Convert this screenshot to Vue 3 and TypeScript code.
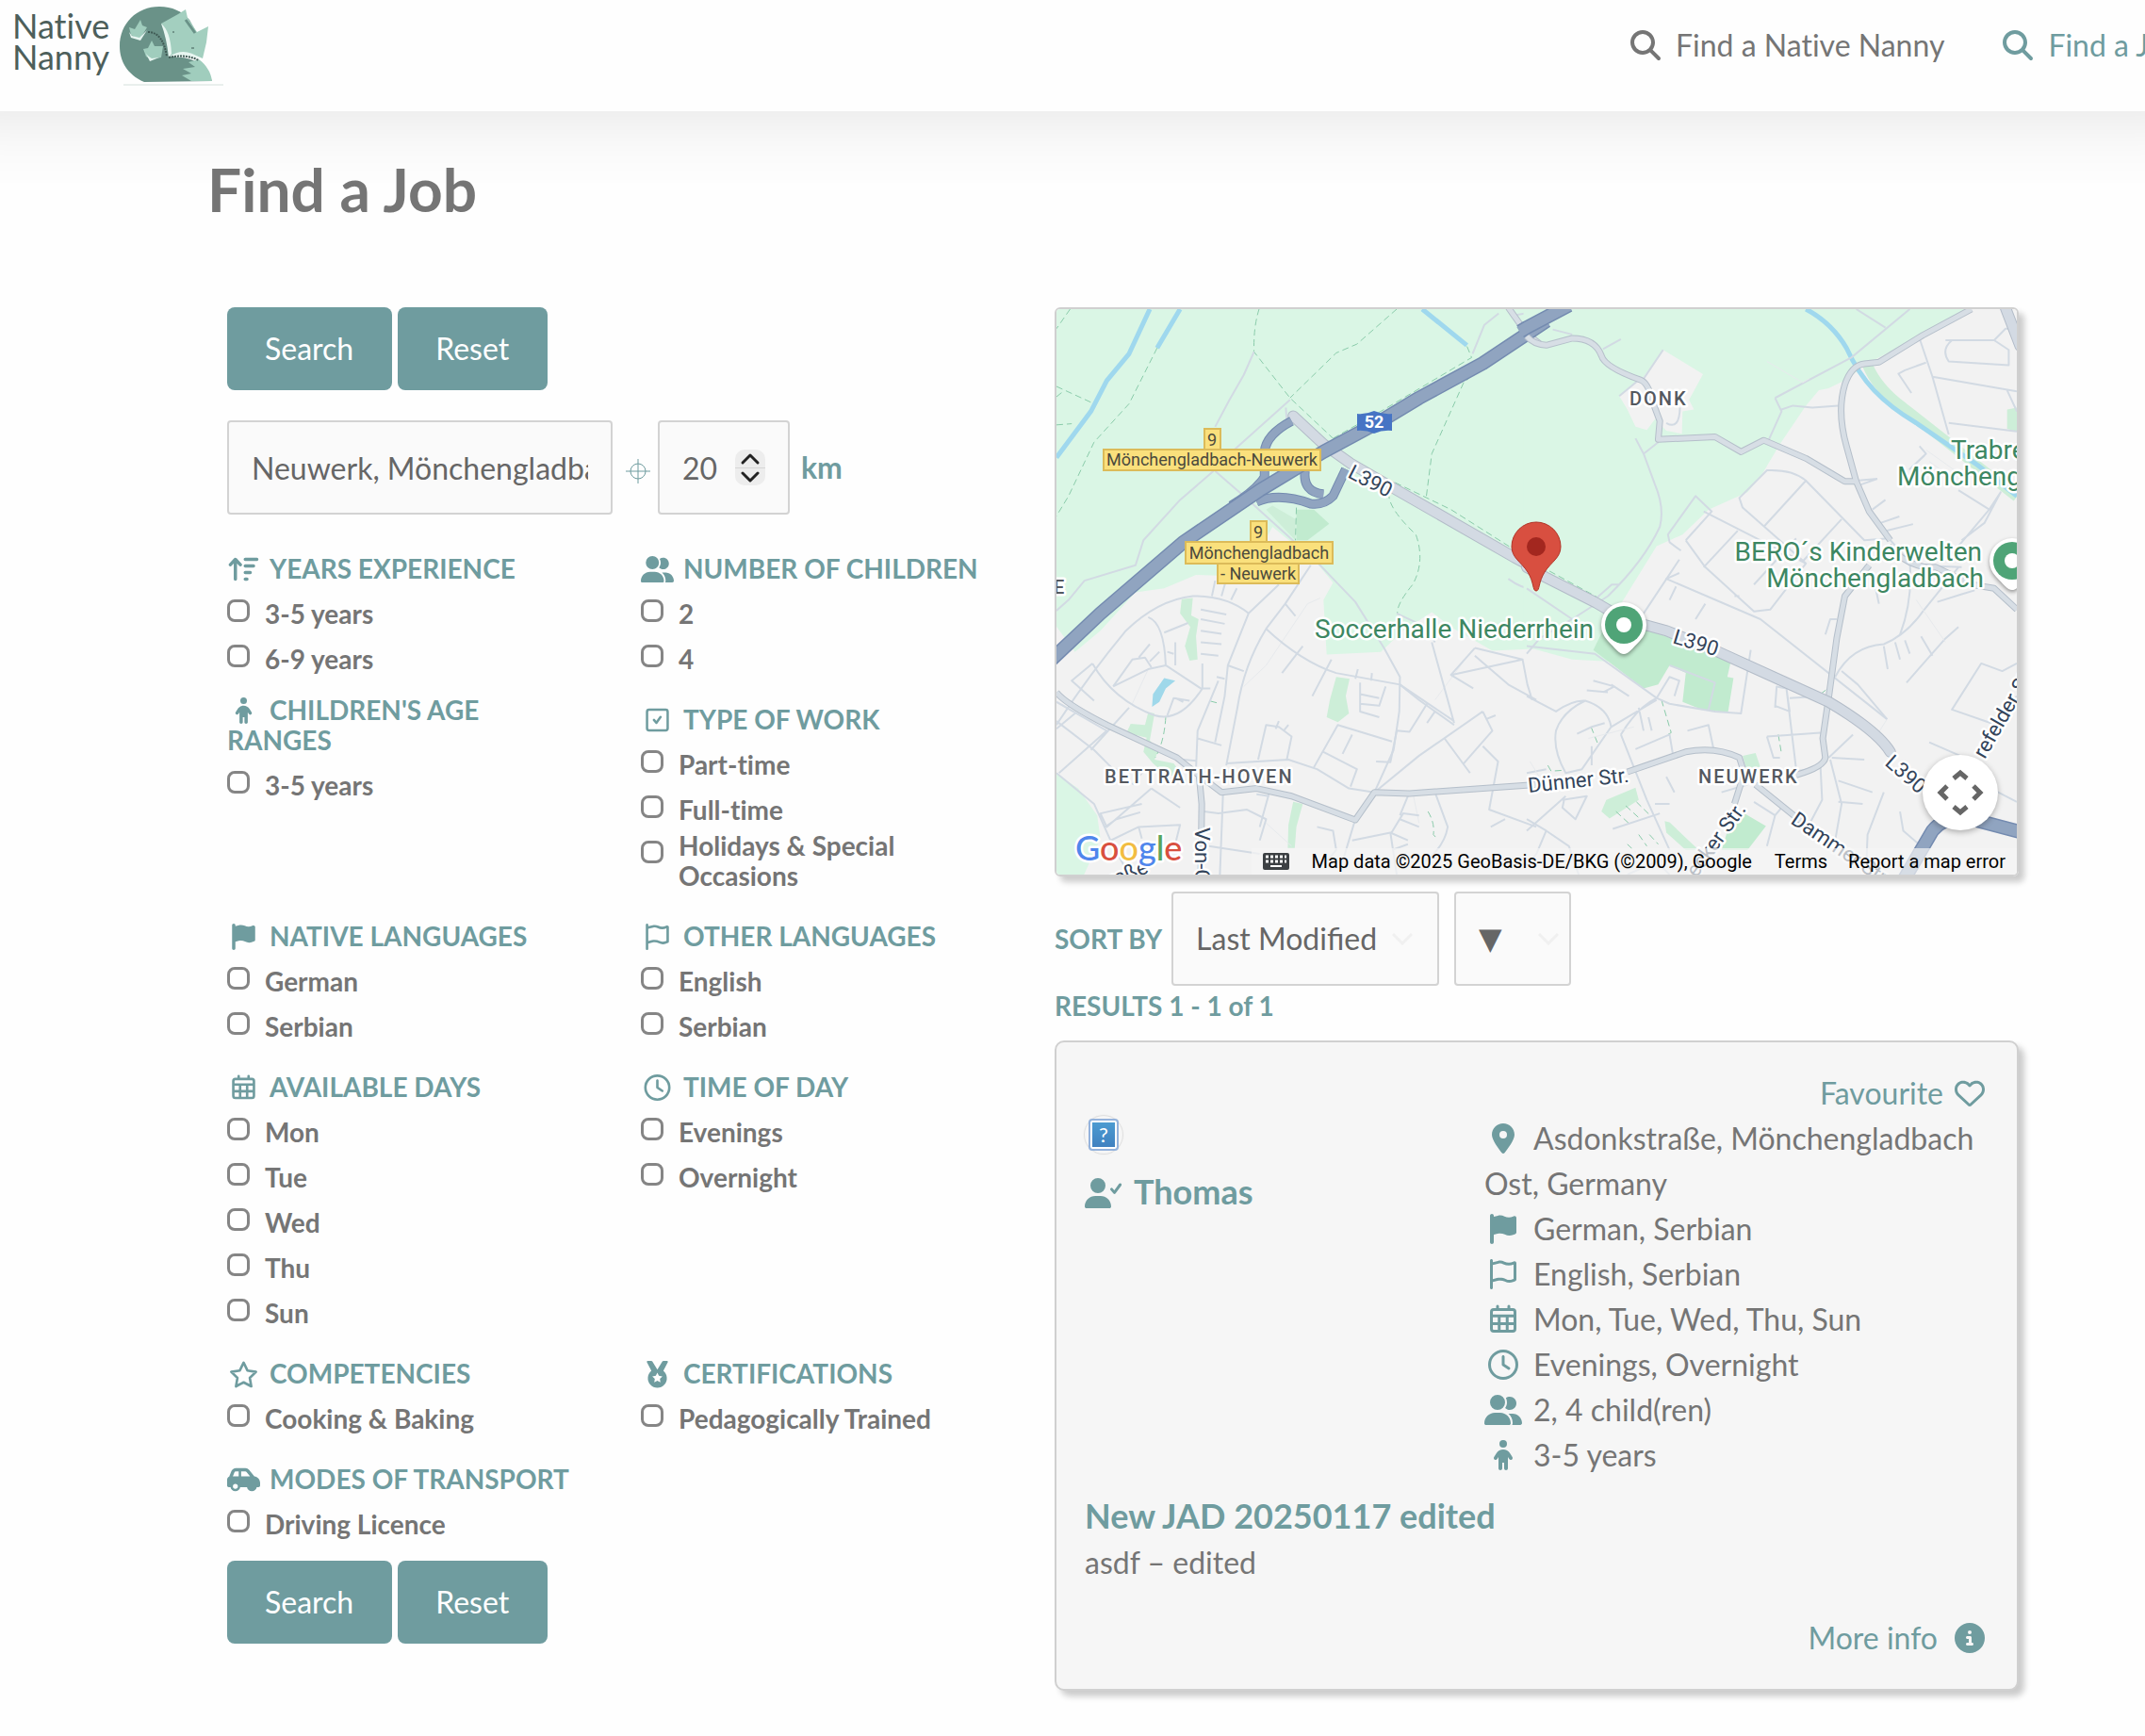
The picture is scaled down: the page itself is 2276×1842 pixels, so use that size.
<script setup lang="ts">
import { ref } from 'vue'

interface Icon {
  w: number
  fill?: string
  line?: string
  sw?: number
}

interface FilterGroup {
  id: string
  title: string
  icon: string
  options: string[]
  wraps?: boolean
}

interface Detail {
  icon: string
  text: string
}

const icons: Record<string, Icon> = {
  search: {
    w: 512,
    fill: 'M416 208c0 45.9-14.9 88.3-40 122.7L502.6 457.4c12.5 12.5 12.5 32.8 0 45.3s-32.8 12.5-45.3 0L330.7 376c-34.4 25.2-76.8 40-122.7 40C93.1 416 0 322.9 0 208S93.1 0 208 0S416 93.1 416 208zM208 352a144 144 0 1 0 0-288 144 144 0 1 0 0 288z',
  },
  pin: {
    w: 384,
    fill: 'M215.7 499.2C267 435 384 279.4 384 192C384 86 298 0 192 0S0 86 0 192c0 87.4 117 243 168.3 307.2c12.3 15.3 35.1 15.3 47.4 0zM192 128a64 64 0 1 1 0 128 64 64 0 1 1 0-128z',
  },
  flag: {
    w: 448,
    fill: 'M64 32C64 14.3 49.7 0 32 0S0 14.3 0 32V64 368 480c0 17.7 14.3 32 32 32s32-14.3 32-32V352l64.3-16.1c41.1-10.3 84.6-5.5 122.5 13.4c44.2 22.1 95.5 24.8 141.7 7.4l34.7-13c12.5-4.7 20.8-16.6 20.8-30V66.1c0-23-24.2-38-44.8-27.7l-9.6 4.8c-46.3 23.2-100.8 23.2-147.1 0c-35.1-17.6-75.4-22-113.5-12.5L64 48V32z',
  },
  flagOutline: {
    w: 448,
    fill: 'M48 24C48 10.7 37.3 0 24 0S0 10.7 0 24V64 350.5 400v88c0 13.3 10.7 24 24 24s24-10.7 24-24V388l80.3-20.1c41.1-10.3 84.6-5.5 122.5 13.4c44.2 22.1 95.5 24.8 141.7 7.4l34.7-13c12.5-4.7 20.8-16.6 20.8-30V66.1c0-23-24.2-38-44.8-27.7l-9.6 4.8c-46.3 23.2-100.8 23.2-147.1 0c-35.1-17.6-75.4-22-113.5-12.5L48 52V24zm0 77.5l96.6-24.2c27-6.7 55.5-3.6 80.4 8.8c54.9 27.4 118.7 29.7 175 6.8V334.7l-24.4 9.1c-33.7 12.6-71.2 10.7-103.4-5.4c-48.2-24.1-103.3-30.1-155.6-17.1L48 338.5v-237z',
  },
  clock: {
    w: 512,
    fill: 'M464 256A208 208 0 1 1 48 256a208 208 0 1 1 416 0zM0 256a256 256 0 1 0 512 0A256 256 0 1 0 0 256zM232 120V256c0 8 4 15.5 10.7 20l96 64c11 7.4 25.9 4.4 33.3-6.7s4.4-25.9-6.7-33.3L280 243.2V120c0-13.3-10.7-24-24-24s-24 10.7-24 24z',
  },
  users: {
    w: 640,
    fill: 'M96 128a128 128 0 1 1 256 0A128 128 0 1 1 96 128zM0 482.3C0 383.8 79.8 304 178.3 304h91.4C368.2 304 448 383.8 448 482.3c0 16.4-13.3 29.7-29.7 29.7H29.7C13.3 512 0 498.7 0 482.3zM609.3 512H471.4c5.4-9.4 8.6-20.3 8.6-32v-8c0-60.7-27.1-115.2-69.8-151.8c2.4-.1 4.7-.2 7.1-.2h61.4C567.8 320 640 392.2 640 481.3c0 17-13.8 30.7-30.7 30.7zM432 256c-31 0-59-12.6-79.3-32.9C372.4 196.5 384 163.6 384 128c0-26.8-6.6-52.1-18.3-74.3C384.3 40.1 407.2 32 432 32c61.9 0 112 50.1 112 112s-50.1 112-112 112z',
  },
  userCheck: {
    w: 640,
    fill: 'M96 128a128 128 0 1 1 256 0A128 128 0 1 1 96 128zM0 482.3C0 383.8 79.8 304 178.3 304h91.4C368.2 304 448 383.8 448 482.3c0 16.4-13.3 29.7-29.7 29.7H29.7C13.3 512 0 498.7 0 482.3z',
    line: 'M456 190L504 246 602 112',
    sw: 48,
  },
  child: {
    w: 320,
    fill: 'M96 64a64 64 0 1 1 128 0A64 64 0 1 1 96 64zm48 320v96c0 17.7-14.3 32-32 32s-32-14.3-32-32V287.8L59.1 321c-9.4 15-29.2 19.4-44.1 10S-4.5 301.9 4.9 287l39.9-63.3C69.7 184 113.2 160 160 160s90.3 24 115.2 63.6L315.1 287c9.4 15 4.9 34.7-10 44.1s-34.7 4.9-44.1-10L240 287.8V480c0 17.7-14.3 32-32 32s-32-14.3-32-32V384H144z',
  },
  heart: {
    w: 512,
    fill: 'M225.8 468.2l-2.5-2.3L48.1 303.2C17.4 274.7 0 234.7 0 192.8v-3.3c0-70.4 50-130.8 119.2-144C158.6 37.9 198.9 47 231 69.6c9 6.4 17.4 13.8 25 22.3c4.2-4.8 8.7-9.2 13.5-13.3c3.7-3.2 7.5-6.2 11.5-9C313.1 47 353.4 37.9 392.8 45.4C462 58.6 512 119.1 512 189.5v3.3c0 41.9-17.4 81.9-48.1 110.4L288.7 465.9l-2.5 2.3c-8.2 7.6-19 11.9-30.2 11.9s-22-4.2-30.2-11.9zM239.1 145c-.4-.3-.7-.7-1-1.1l-17.8-20-.1-.1c-23.1-25.9-58-37.7-92-31.2C81.6 101.5 48 142.1 48 189.5v3.3c0 28.5 11.9 55.8 32.8 75.2L256 430.7 431.2 268c20.9-19.4 32.8-46.7 32.8-75.2v-3.3c0-47.3-33.6-88-80.1-96.9c-34-6.5-69 5.4-92 31.2l-.2.2-17.8 20c-.3.4-.7.7-1 1.1c-4.5 4.5-10.6 7-16.9 7s-12.4-2.5-16.9-7z',
  },
  info: {
    w: 512,
    fill: 'M256 512A256 256 0 1 0 256 0a256 256 0 1 0 0 512zM216 336h24V272H216c-13.3 0-24-10.7-24-24s10.7-24 24-24h48c13.3 0 24 10.7 24 24v88h8c13.3 0 24 10.7 24 24s-10.7 24-24 24H216c-13.3 0-24-10.7-24-24s10.7-24 24-24zm40-208a32 32 0 1 1 0 64 32 32 0 1 1 0-64z',
  },
  car: {
    w: 640,
    fill: 'M171.3 96H224v96H111.3l30.4-75.9C146.5 104 158.2 96 171.3 96zM272 192V96h81.2c9.7 0 18.9 4.4 25 12l67.2 84H272zm256.2 1L428.2 68c-18.2-22.8-45.8-36-75-36H171.3c-39.3 0-74.6 23.9-89.1 60.3L40.6 196.4C16.8 205.8 0 228.9 0 256V368c0 17.7 14.3 32 32 32H65.3c7.6 45.4 47.1 80 94.7 80s87.1-34.6 94.7-80H385.3c7.6 45.4 47.1 80 94.7 80s87.1-34.6 94.7-80H608c17.7 0 32-14.3 32-32V320c0-65.2-48.8-119-111.8-127zM432 384a48 48 0 1 0 96 0 48 48 0 1 0-96 0zM160 336a48 48 0 1 1 0 96 48 48 0 1 1 0-96z',
  },
  sort: {
    w: 576,
    line: 'M128 448V72M32 168L128 64 224 168M320 64H544M320 192H480M320 320H416M320 448H352',
    sw: 64,
  },
  check: {
    w: 448,
    line: 'M64 56H384Q424 56 424 96V416Q424 456 384 456H64Q24 456 24 416V96Q24 56 64 56ZM158 254L205 310 286 196',
    sw: 46,
  },
  calendar: {
    w: 448,
    line: 'M64 88H384Q424 88 424 128V416Q424 456 384 456H64Q24 456 24 416V128Q24 88 64 88ZM24 196H424M24 326H424M156 200V456M292 200V456M128 32V88M320 32V88',
    sw: 48,
  },
  star: {
    w: 576,
    line: 'M288 34L362 186 528 212 408 330 436 494 288 416 140 494 168 330 48 212 214 186Z',
    sw: 48,
  },
  medal: {
    w: 448,
    fill: 'M20 24Q16 4 40 2L108 0 126 10 224 168 322 10 340 0 408 2Q432 4 428 24L340 194A184 184 0 1 1 108 194ZM224 228L194 290 126 300 175 348 164 416 224 384 284 416 273 348 322 300 254 290Z',
  },
}

const groups: FilterGroup[] = [
  { id: 'exp', title: 'YEARS EXPERIENCE', icon: 'sort', options: ['3-5 years', '6-9 years'] },
  { id: 'num', title: 'NUMBER OF CHILDREN', icon: 'users', options: ['2', '4'] },
  { id: 'age', title: "CHILDREN'S AGE RANGES", icon: 'child', options: ['3-5 years'], wraps: true },
  { id: 'work', title: 'TYPE OF WORK', icon: 'check', options: ['Part-time', 'Full-time', 'Holidays & Special Occasions'] },
  { id: 'native', title: 'NATIVE LANGUAGES', icon: 'flag', options: ['German', 'Serbian'] },
  { id: 'other', title: 'OTHER LANGUAGES', icon: 'flagOutline', options: ['English', 'Serbian'] },
  { id: 'days', title: 'AVAILABLE DAYS', icon: 'calendar', options: ['Mon', 'Tue', 'Wed', 'Thu', 'Sun'] },
  { id: 'time', title: 'TIME OF DAY', icon: 'clock', options: ['Evenings', 'Overnight'] },
  { id: 'comp', title: 'COMPETENCIES', icon: 'star', options: ['Cooking & Baking'] },
  { id: 'cert', title: 'CERTIFICATIONS', icon: 'medal', options: ['Pedagogically Trained'] },
  { id: 'transport', title: 'MODES OF TRANSPORT', icon: 'car', options: ['Driving Licence'] },
]

const details: Detail[] = [
  { icon: 'pin', text: 'Asdonkstraße, Mönchengladbach Ost, Germany' },
  { icon: 'flag', text: 'German, Serbian' },
  { icon: 'flagOutline', text: 'English, Serbian' },
  { icon: 'calendar', text: 'Mon, Tue, Wed, Thu, Sun' },
  { icon: 'clock', text: 'Evenings, Overnight' },
  { icon: 'users', text: '2, 4 child(ren)' },
  { icon: 'child', text: '3-5 years' },
]

const place = ref('Neuwerk, Mönchengladbach, Germany')
const radius = ref(20)
const checked = ref<string[]>([])

function reset(): void {
  checked.value = []
}

function box(name: string): string {
  return `0 0 ${icons[name].w} 512`
}

/* Road geometry, one set per map tile */
const westStreets = [
  'M560 350L605 280 650 215 682 155M795 280L620 410 M560 465L650 530 810 650 890 710 1000 805 1090 925 1140 1000 1138 1090 1120 1190 1060 1300M555 465L450 540 335 645 310 710 150 750 100 800 62 828',
  'M62 1125Q160 1000 280 880Q380 800 490 790Q600 790 665 835L600 970 590 1050 560 1170M665 835L760 760M550 790L560 750M580 790L592 755M610 800L628 770M350 845Q400 860 405 970L350 980 240 1025M405 970L515 1030 545 1030M175 965Q240 1060 370 1100Q450 1120 520 1030L520 965M175 965L110 1010 180 1062M240 1025L300 955 340 950 360 975M320 950L355 915M355 960L385 935M435 970L435 910M410 935L430 940',
  'M515 825L595 838M515 850L590 862M515 880L580 888M515 910L580 915M515 940L570 945M600 970L650 985M565 1000L590 1005M400 885L475 860M720 875Q830 960 940 990L1140 1020 1200 1060 1310 1125M770 990L835 920M865 1050L925 955M1000 1005L1008 980M1050 1010L1052 990M1015 1015L1015 1090 1075 1105M1015 1045L1075 1055M1015 1070L1075 1075 1095 1025M860 710L780 810 720 875Q650 970 630 1080L595 1230M780 810L812 842M410 1100L430 1055 480 1062M435 1055L460 1065',
  'M500 1240L505 1140 570 1010M505 1160L580 1178M595 1225L790 1215 880 1240 980 1290 1060 1300M695 1215L720 1125 760 1130 800 1155 785 1215M750 1135L760 1115M775 1140L790 1125M870 1235L945 1125 1115 1168M900 1195L1005 1240 985 1285M960 1200L990 1150M1065 1220L1110 1222 1130 1140 1170 1143 1225 1070M1225 1120L1250 1090M1060 1300L1200 1205 1400 1090M1310 1120L1240 910M1280 1160L1360 1250M1400 1090L1430 1140 1340 1225M1400 1180L1448 1220 1420 1345 1568 1390M1140 1020L1310 1115',
  'M62 1065L220 1140 70 1250M62 1115L180 1190 240 1240 320 1245M62 1250L180 1330 240 1440 290 1514M170 1190L290 1080M62 1135L120 1095M460 1215L500 1218M300 1280L340 1240M360 1290L450 1340M360 1290L220 1390 200 1355 330 1330M215 1390L250 1370 325 1352M220 1430L320 1390 450 1385 430 1450M320 1390L330 1420M525 1350L570 1355 660 1345 720 1370 700 1425M730 1300L700 1390M585 1300L575 1514M540 1440L700 1460M690 1305L730 1310',
  'M1000 1370L960 1480M1250 1300L1290 1390Q1280 1440 1220 1480M990 1425L1110 1405 1130 1514M1110 1410L1150 1355 1200 1360M1140 1370L1200 1390M1110 1405L1165 1425M1115 1450L1165 1435M880 1390L930 1400 940 1450 910 1480M1140 1360L1165 1310M1375 945L1480 1020 1568 1060M1375 925L1525 955 1300 995 1370 1030M1375 925L1300 995M1525 955L1540 1020 1555 1060M1410 1110L1440 1100M1425 1390L1470 1370',
]
const eastStreets = [
  'M80 97L140 110M235 148L290 122M360 225L420 150M285 270L350 225M430 340Q470 360 472 300M335 380L360 420 395 500Q425 560 410 610Q360 700 250 790L140 850 0 770M360 420L405 390M250 790L285 760 262 760 215 795M360 835L470 695M140 850L40 900 0 940',
  'M765 275L1000 170 1180 44M1015 44L1105 92M765 275L785 310 745 385M785 305L820 295 880 300 960 295M490 645L570 570 520 530 435 630 440 650 475 672M490 645L550 715 700 830 750 825 860 705 545 570M545 715L650 620M700 760L830 640M730 610L860 490Q820 460 740 463L655 535 665 560 860 705M860 490L1040 645 1115 640M850 700L970 590M470 730L430 745 720 850 1110 1110M440 800L460 765M520 850L550 810M655 790L640 790',
  'M1015 490L1080 485M1030 500L1080 485M1065 565L1105 540M1090 600L1148 583M1110 620L1190 603M1210 120L1250 220 1300 370M1250 220L1510 258M1300 340L1510 362M1480 255L1510 310M1290 125L1440 125 1485 150 1485 190 1300 180Q1275 150 1310 125M1440 125L1475 95 1510 95M1185 262L1145 212 1165 203 1230 183M1210 400L1230 420 1180 460 1225 425M1330 515L1425 565 1460 520 1410 600 1340 645M1425 565L1310 680M1115 640L1180 700Q1190 800 1150 890M1180 710L1340 715M1265 805L1340 785 1380 775M1085 810L1075 770M975 790L1045 710',
  'M950 1000Q1000 920 1100 915Q1170 890 1220 830L1330 715M1100 920L1112 980M1135 910L1150 955M1165 905L1180 940M1215 895L1250 945M1170 1015L1290 900 1330 870M1510 965L1465 985 1400 965 1310 1085 1430 1120 1510 1050M970 985L1020 1020 1110 1110M920 890L935 850 955 850M205 1010L270 1025 235 1040M185 1035L250 1040M260 1020L315 1050M0 920L210 940 400 1055 440 1070 580 1090 660 1095 690 930M400 1055L440 1000 470 1010 455 1050M440 970L580 1015 560 1085',
  'M0 1050L90 1090 Q140 1060 180 1062Q250 1080 260 1130L170 1240 120 1250Q80 1190 90 1140Q110 1090 180 1062M260 1130L400 1060M155 1148L200 1130 240 1120M200 1180L200 1230M290 1150L370 1320 440 1450M290 1150Q340 1080 400 1055M335 1188L440 1150 450 1200M345 1080L360 1140M375 1105L385 1140M495 1140L560 1125 575 1185M765 1080L770 1025 800 1030 810 1090 765 1075M800 1030L830 1240M740 1155L905 1145M740 1155L760 1210 780 1210M810 1055L910 1050M0 1250L60 1240',
  'M930 1210L1005 1150M935 1215L970 1330 945 1450M960 1270L1065 1300M960 1325L1035 1330M940 1210L1040 1215M830 1245L905 1235 910 1320 860 1400M600 1300L680 1280M700 1325L765 1360 740 1440M765 1360L785 1340M1100 1300L1050 1410 1045 1514M1150 1350L1160 1400 1215 1440M1240 1170L1335 1205M1430 1290L1510 1325M110 1320L185 1310 150 1370 110 1340 115 1320M265 1395L410 1355M310 1514L400 1480 440 1514M0 1370L60 1400 30 1460 0 1490M60 1400L130 1440 160 1514M395 1330L440 1330M430 1260L455 1300M0 1400L120 1310',
]
const westMain = [
  'M62 1040Q90 1070 220 1125L440 1210 500 1250 580 1300 690 1290 800 1310 1000 1372 1060 1300 1170 1303 1568 1280',
  'M510 1260L518 1330 515 1514',
]
const eastMain = [
  'M0 115Q20 135 60 138L140 120Q210 120 230 165Q240 195 350 228Q375 235 390 290L410 335 405 383 580 376 660 415 730 385 860 432 980 492 1015 492',
  'M1370 44L1220 112 1085 182 1040 186Q1000 190 980 240Q955 310 985 400L1015 492 1055 570 1120 645M1055 710L980 790 955 900 930 1055 912 1160 920 1210Q915 1235 830 1255',
  'M310 1247L490 1195Q580 1180 655 1210L670 1250 640 1330M705 1280L830 1365 950 1440M1115 660Q1180 720 1260 715L1370 760 1440 770 1510 825',
]
const westWide = 'M805 322L900 395 985 445 1110 505 1500 690 1580 725'
const eastWide = 'M0 715L60 742 215 808 300 850M300 850L430 880 590 935 760 1000 930 1065Q1080 1140 1120 1195'
const westRamps = 'M800 335Q720 370 715 415L715 480Q690 515 610 555M690 545Q760 520 860 550Q900 555 930 530L970 460M842 465Q835 520 900 525'
const motorway = 'M40 960L200 835 460 650 700 515 900 415 1080 335 1200 275 1400 185 1600 75'
</script>

<template>
  <div class="page">
    <header class="site-header">
      <a class="logo" href="#" aria-label="Native Nanny home">
        <span class="wordmark"><span>Native</span><span>Nanny</span></span>
        <svg class="fox" viewBox="0 0 112 84" aria-hidden="true">
          <path d="M4 83H110" stroke="#e9efed" stroke-width="2" />
          <path d="M26 80C8 72 0 58 0 42C0 18 18 0 42 0C56 0 66 5 74 14L84 32 58 54C78 52 92 64 98 79Z" fill="#6a9288" />
          <path d="M98 79H76L66 73 76 71 67 66 80 64 73 59 84 56C92 62 97 70 98 79Z" fill="#a0cdbd" />
          <path d="M44 18L62 8 70 3 72 12 82 27 94 21 92 38 88 55Q70 46 53 53Q54 34 44 18Z" fill="#a3cfbf" />
          <path d="M44 18Q54 26 55 50L52 54Q50 34 44 18Z" fill="#e8f6f1" />
          <path d="M53 53Q68 42 86 55Q70 52 53 53Z" fill="#e8f6f1" />
          <path d="M10 22L16 24 22 14 24 20 29 22 26 27 21 35 12 30Z" fill="#a0cdbd" />
          <path d="M10 27L13 31 21 33 29 25 22 36 12 33Z" fill="#e8f6f1" />
          <path d="M25 45L30 44 34 36 37 42 46 42 44 54 33 56 28 53Z" fill="#a0cdbd" />
          <path d="M25 44Q28 52 34 55L42 54 32 58Z" fill="#e8f6f1" />
          <path d="M30 27Q46 27 50 53M52 54Q70 50 84 57" stroke="#3f5a54" stroke-width="2" stroke-dasharray="2 1" fill="none" />
          <path d="M70 14L80 28" stroke="#6a9288" stroke-width="3" fill="none" />
          <path d="M56 27H58M76 44H79" stroke="#3f5a54" stroke-width="1" fill="none" />
        </svg>
      </a>
      <nav class="nav" aria-label="Main">
        <a class="nav-link" href="#">
          <svg class="icon" :viewBox="box('search')" aria-hidden="true"><path :d="icons.search.fill" /></svg>
          <span>Find a Native Nanny</span>
        </a>
        <a class="nav-link active" href="#">
          <svg class="icon" :viewBox="box('search')" aria-hidden="true"><path :d="icons.search.fill" /></svg>
          <span>Find a Job</span>
        </a>
      </nav>
    </header>

    <main class="content">
      <h1>Find a Job</h1>
      <div class="columns">
        <form class="filters" @submit.prevent>
          <div class="actions">
            <button class="btn" type="submit">Search</button>
            <button class="btn" type="button" @click="reset">Reset</button>
          </div>
          <div class="where">
            <input v-model="place" class="field place" type="text" aria-label="Location" />
            <button class="locate" type="button" aria-label="Use my location">
              <svg viewBox="0 0 26 26"><circle cx="13" cy="13" r="8" /><path d="M13 0V26M0 13H26" /></svg>
            </button>
            <div class="radius">
              <input id="radius" v-model.number="radius" class="field distance" type="number" />
              <div class="stepper">
                <button type="button" aria-label="Increase" @click="radius++">
                  <svg viewBox="0 0 32 18"><path d="M8 13L16 5 24 13" /></svg>
                </button>
                <button type="button" aria-label="Decrease" @click="radius--">
                  <svg viewBox="0 0 32 18"><path d="M8 5L16 13 24 5" /></svg>
                </button>
              </div>
            </div>
            <label class="unit" for="radius">km</label>
          </div>

          <div class="groups">
            <section v-for="g in groups" :key="g.id" class="group">
              <h2 :class="{ wraps: g.wraps }">
                <svg class="icon" :viewBox="box(g.icon)" aria-hidden="true">
                  <path v-if="icons[g.icon].fill" :d="icons[g.icon].fill" />
                  <path v-if="icons[g.icon].line" class="line" :d="icons[g.icon].line" :stroke-width="icons[g.icon].sw" />
                </svg>{{ g.title }}
              </h2>
              <label v-for="(o, i) in g.options" :key="o" class="option" :for="`${g.id}-${i}`">
                <input :id="`${g.id}-${i}`" v-model="checked" type="checkbox" :value="`${g.id}-${i}`" />
                <span :class="{ wraps: o.length > 24 }">{{ o }}</span>
              </label>
            </section>
          </div>

          <div class="actions">
            <button class="btn" type="submit">Search</button>
            <button class="btn" type="button" @click="reset">Reset</button>
          </div>
        </form>

        <div class="results">
          <div class="map">
            <svg class="tiles" viewBox="0 0 1019 600" preserveAspectRatio="xMidYMid slice" role="img" aria-label="Map of Neuwerk">
              <rect width="1019" height="600" fill="#f2f2f2" />
              <g class="tile" transform="translate(-21 -18) scale(.3381 .4082)">
                <path class="wood" d="M50 30H1620V925L1430 932 1300 870 1240 832 1150 880 1080 935 910 942 900 800 930 755 880 705 740 610 720 640 680 740 500 735 400 770 310 780 200 880 120 935 50 855ZM50 1245L130 1290 190 1360 200 1420 140 1530 50 1530Z" />
                <path class="park" d="M720 565L740 555 812 590 812 645ZM455 798L490 795 485 840 508 850 500 895 505 955 480 958 465 920 482 870 450 835ZM940 1000L982 1005 970 1050 980 1095 945 1118 910 1105 920 1060ZM282 1145L295 1122 340 1125 350 1092 370 1095 355 1165 380 1195 370 1215 430 1225 470 1270 400 1250 365 1225 335 1195 345 1158ZM805 1325L835 1330 815 1390 810 1445 788 1445 790 1385Z" />
                <path class="park-dark" d="M815 565L870 565 918 602 850 645 815 645Z" />
                <path class="water-fill" d="M400 1003L435 1010 405 1030 385 1065 362 1078 365 1045Z" />
                <path class="water" d="M355 44L290 160 220 230 170 310 62 430M450 44L378 145M1210 44L1350 138" />
                <path class="trail" d="M105 44L62 95M698 44Q680 90 682 155L795 275 930 380M378 145L290 290 180 390 100 530 62 582M62 245L180 290M62 345L110 342M62 272L80 260M1130 44L1005 135 940 158 795 275M1390 200L1340 235 1240 420 1223 530M930 380L1090 305 1365 170 1350 140M1125 495L1300 565 1500 670M1105 520Q1100 560 1190 630Q1220 700 1180 760Q1130 810 1132 835M815 560L812 645M405 1105Q400 1170 372 1210M545 1063L568 1068M1228 1350Q1250 1380 1245 1410L1258 1422" />
                <path class="street faint" d="M650 1025L720 970 850 810 890 795M300 1070L350 980M1250 1060L1340 960M800 1440L720 1380M1180 1300L1200 1380" />
                <path v-for="d in westStreets" :key="d" class="street" :d="d" />
                <path class="street" d="M1480 745Q1520 770 1568 775M1130 835L1220 870 1250 910M1368 160L1405 85 1450 55M1500 60L1568 50M782 300L785 340" />
              </g>
              <g class="tile" transform="translate(499 -18) scale(.3444 .4082)">
                <path class="wood" d="M-10 30H1380L1340 60 1210 115 1040 190 990 225 930 250 900 255 860 295 780 395 720 480 680 520 560 565 480 630 400 660 290 810 250 960 140 955 -10 920Z" />
                <path class="land" d="M420 150L543 213 500 280 515 305 480 310 478 368 430 360 395 330 370 358 335 350 310 305 285 270 360 220Z" />
                <path class="park" d="M1480 305L1510 300V362L1480 355ZM665 1205L705 1198 722 1240 685 1265ZM230 1350L245 1320 335 1288 345 1320 255 1368ZM425 1375L440 1378 530 1450 490 1450 430 1405Z" />
                <path class="park-dark" d="M205 930L240 870 300 860 430 895 630 955 618 1000 637 1003 620 1092 540 1085 480 1065 490 990 440 970 405 1020 360 1030ZM615 1410L660 1350 737 1388 680 1450 600 1450Z" />
                <path class="water-bank" d="M1050 190Q1080 250 1160 300L1510 532" />
                <path class="water" d="M860 44Q940 80 985 145Q1020 210 1070 255Q1120 300 1200 340L1390 450 1510 530" />
                <path class="trail" d="M70 725L215 792M415 1060L445 1145 435 1150M198 1130L218 1172M775 1150L785 1200M65 1230L75 1245 110 1243M275 1350L320 1385M305 1335L350 1370M338 1325L380 1360M310 1435L335 1455M345 1410L370 1440M378 1410L405 1435M905 1045L935 1025" />
                <path v-for="d in eastStreets" :key="d" class="street" :d="d" />
                <path class="street faint" d="M740 180L850 235 870 225M1200 800L1290 910M1110 1110L1080 1150M10 1220L60 1290M190 1160L330 1130M1230 410L1330 470M1240 440L1330 495" />
              </g>
              <g class="tile" transform="translate(-21 -18) scale(.3381 .4082)">
                <path v-for="d in westMain" :key="d" class="main-case" :d="d" />
                <path v-for="d in westMain" :key="d + 'f'" class="main-road" :d="d" />
                <path class="wide-case" :d="westWide" /><path class="wide-road" :d="westWide" />
                <path class="ramp-case" :d="westRamps" /><path class="ramp" :d="westRamps" />
                <path class="main-case" d="M1480 40L1540 110 1580 135" /><path class="main-road" d="M1480 40L1540 110 1580 135" />
                <path class="motor-case" :d="motorway" /><path class="motor" :d="motorway" />
              </g>
              <g class="tile" transform="translate(499 -18) scale(.3444 .4082)">
                <path v-for="d in eastMain" :key="d" class="main-case" :d="d" />
                <path v-for="d in eastMain" :key="d + 'f'" class="main-road" :d="d" />
                <path class="motor-case" d="M-20 102L0 92 130 34" /><path class="motor" d="M-22 103L0 92 130 34" />
                <path class="wide-case" :d="eastWide" /><path class="wide-road" :d="eastWide" />
                <path class="wide-case" d="M1470 30L1520 140" /><path class="wide-road" d="M1470 30L1520 140" />
                <path class="motor-case" d="M1160 1530L1250 1400Q1290 1360 1350 1365L1530 1405" />
                <path class="motor" d="M1160 1530L1250 1400Q1290 1360 1350 1365L1530 1405" />
              </g>

              <g class="exit">
                <rect x="157" y="127" width="17" height="22" /><rect x="50" y="149" width="230" height="22" />
                <text x="165" y="145">9</text><text x="165" y="166">Mönchengladbach-Neuwerk</text>
                <rect x="206" y="225" width="17" height="22" /><rect x="137" y="247" width="156" height="23" /><rect x="171" y="270" width="86" height="21" />
                <text x="214" y="243">9</text><text x="215" y="265">Mönchengladbach</text><text x="214" y="287">- Neuwerk</text>
              </g>
              <path d="M319 111Q328 112 337 108Q346 112 356 111V129Q346 128 337 132Q328 128 319 129Z" fill="#4674c4" />
              <text class="shield" x="337" y="126">52</text>

              <g class="road-label">
                <text transform="translate(308 178) rotate(27)">L390</text>
                <text transform="translate(653 354) rotate(17)">L390</text>
                <text transform="translate(878 483) rotate(41)">L390</text>
                <text transform="translate(501 513) rotate(-6)">Dünner Str.</text>
                <text transform="translate(147 550) rotate(90)">Von-Galen</text>
                <text transform="translate(58 614) rotate(-22)">raße</text>
                <text transform="translate(985 478) rotate(-60)">refelder Str.</text>
                <text transform="translate(679 604) rotate(-54)">ecker Str.</text>
                <text transform="translate(778 545) rotate(34)">Dammer Str.</text>
              </g>
              <g class="district">
                <text x="51" y="503">BETTRATH-HOVEN</text><text x="608" y="102">DONK</text>
                <text x="681" y="503">NEUWERK</text><text x="-3" y="302">E</text>
              </g>
              <g class="poi">
                <text x="570" y="349" text-anchor="end">Soccerhalle Niederrhein</text>
                <text x="982" y="267" text-anchor="end">BERO´s Kinderwelten</text>
                <text x="984" y="295" text-anchor="end">Mönchengladbach</text>
                <text x="949" y="159">Trabrennbahn</text><text x="892" y="187">Mönchengladbach</text>
              </g>
              <g v-for="p in [[602, 335], [1014, 267]]" :key="p[0]" class="poi-pin" :transform="`translate(${p[0]} ${p[1]})`">
                <path d="M0 31C-5 31-9 25-17 17A24 24 0 1 1 17 17C9 25 5 31 0 31Z" fill="#fff" />
                <circle r="20" fill="#4fa477" /><circle r="8" fill="#fff" />
              </g>
              <path d="M509 299C505 299 507 290 500 279C493 268 483 264 483 252A26 26 0 0 1 535 252C535 264 525 268 518 279C511 290 513 299 509 299Z" fill="#d84f40" stroke="#b13226" stroke-width="1" />
              <circle cx="509" cy="252" r="10" fill="#a3271f" />
              <text class="google" x="20" y="585"><tspan fill="#4f86ec">G</tspan><tspan fill="#d9503f">o</tspan><tspan fill="#f2bd42">o</tspan><tspan fill="#4f86ec">g</tspan><tspan fill="#58a55c">l</tspan><tspan fill="#d9503f">e</tspan></text>
            </svg>
            <button class="camera" type="button" aria-label="Map camera controls">
              <svg viewBox="0 0 80 80"><path d="M33 25L40 19 47 25M33 55L40 61 47 55M26 33L19 40 26 47M54 33L61 40 54 47" /></svg>
            </button>
            <div class="credits">
              <button class="keys" type="button" aria-label="Keyboard shortcuts">
                <svg viewBox="0 0 28 18"><rect width="28" height="18" rx="2" fill="#3c4043" /><path d="M3 4H25M3 9H25" stroke="#fff" stroke-width="3" stroke-dasharray="3 2" /><path d="M8 14H20" stroke="#fff" stroke-width="2" /></svg>
              </button>
              <span class="copyright">Map data ©2025 GeoBasis-DE/BKG (©2009), Google</span>
              <a class="terms" href="#">Terms</a>
              <a href="#">Report a map error</a>
            </div>
          </div>

          <div class="sorting">
            <label for="sort">SORT BY</label>
            <select id="sort" class="field sort-key"><option>Last Modified</option></select>
            <select class="field sort-dir" aria-label="Sort direction"><option>▼</option></select>
          </div>
          <p class="count">RESULTS 1 - 1 of 1</p>

          <article class="card">
            <a class="card-link" href="#">Favourite
              <svg class="icon" :viewBox="box('heart')" aria-hidden="true"><path :d="icons.heart.fill" /></svg>
            </a>
            <div class="card-body">
              <div>
                <div class="avatar" role="img" aria-label="Profile picture"><span>?</span></div>
                <h3>
                  <svg class="icon" :viewBox="box('userCheck')" aria-hidden="true">
                    <path :d="icons.userCheck.fill" /><path class="line" :d="icons.userCheck.line" :stroke-width="icons.userCheck.sw" />
                  </svg>Thomas
                </h3>
              </div>
              <ul>
                <li v-for="d in details" :key="d.icon">
                  <svg class="icon" :viewBox="box(d.icon)" aria-hidden="true">
                    <path v-if="icons[d.icon].fill" :d="icons[d.icon].fill" />
                    <path v-if="icons[d.icon].line" class="line" :d="icons[d.icon].line" :stroke-width="icons[d.icon].sw" />
                  </svg>{{ d.text }}
                </li>
              </ul>
            </div>
            <h3 class="job-title">New JAD 20250117 edited</h3>
            <p>asdf – edited</p>
            <a class="card-link more" href="#">More info
              <svg class="icon" :viewBox="box('info')" aria-hidden="true"><path :d="icons.info.fill" /></svg>
            </a>
          </article>
        </div>
      </div>
    </main>
  </div>
</template>

<style>
body {
  margin: 0;
  background: #fefefe;
}
</style>

<style scoped>
.page {
  --teal: #6f9c9f;
  --grey: #757575;
  --line: #d3d3d3;
  min-height: 100vh;
  overflow: hidden;
  color: var(--grey);
  font-family: Lato, sans-serif;
  font-size: 32px;
  font-variant-ligatures: none;
  line-height: 48px;
}
.page *,
.page *::before {
  box-sizing: border-box;
}
a {
  color: inherit;
  text-decoration: none;
}
button,
input,
select {
  margin: 0;
  font: inherit;
}
h1, h2, h3, p, ul {
  margin: 0;
  padding: 0;
  list-style: none;
}
.icon {
  width: 40px;
  height: 32px;
  flex: none;
  fill: var(--teal);
  vertical-align: -4px;
  overflow: visible;
}
.icon .line {
  fill: none;
  stroke: var(--teal);
  stroke-linecap: round;
  stroke-linejoin: round;
}

.site-header {
  display: flex;
  justify-content: space-between;
  align-items: flex-start;
  height: 118px;
  background: #fefefe;
  box-shadow: 0 -80px 80px 80px rgba(0, 0, 0, 0.12);
}
.logo {
  display: flex;
  align-items: flex-start;
  padding: 7px 0 0 13px;
}
.wordmark {
  display: flex;
  flex-direction: column;
  width: 114px;
  padding-top: 4px;
  color: #4d5f5b;
  font-size: 36px;
  line-height: 33px;
}
.fox {
  width: 112px;
  height: 84px;
}
.nav {
  display: flex;
  gap: 58px;
  width: 550px;
  padding-top: 24px;
  overflow: hidden;
}
.nav-link {
  display: flex;
  flex: none;
  align-items: center;
  gap: 12px;
}
.nav-link .icon {
  fill: var(--grey);
}
.nav-link.active {
  color: var(--teal);
}
.nav-link.active .icon {
  fill: var(--teal);
}

.content {
  padding: 43px 134px 48px 220px;
}
h1 {
  margin-bottom: 85px;
  font-size: 64px;
  line-height: 80px;
}
.columns {
  display: grid;
  grid-template-columns: 814fr 1023fr;
  gap: 64px;
  padding-left: 21px;
  align-items: start;
}
.actions {
  display: flex;
  gap: 6px;
}
.btn {
  height: 88px;
  padding: 0 41px 0 40px;
  border: 0;
  border-radius: 8px;
  background: var(--teal);
  color: #fff;
}
.where {
  display: flex;
  align-items: center;
  margin: 32px 0 33px;
}
.field {
  height: 100px;
  padding: 0 24px;
  border: 2px solid var(--line);
  border-radius: 4px;
  background-color: #fafafa;
  color: #666;
  outline: 0;
}
.place {
  width: 409px;
}
.locate {
  width: 26px;
  height: 26px;
  margin: 8px 8px 0 14px;
  padding: 0;
  border: 0;
  background: none;
}
.locate svg {
  display: block;
  fill: none;
  stroke: var(--teal);
  stroke-width: 1;
}
.radius {
  position: relative;
}
.distance {
  width: 140px;
  appearance: textfield;
}
.distance::-webkit-inner-spin-button {
  appearance: none;
}
.stepper {
  position: absolute;
  top: 31px;
  right: 26px;
  width: 32px;
  border-radius: 10px;
  background: #ededed;
}
.stepper button {
  display: block;
  width: 32px;
  height: 19px;
  padding: 0;
  border: 0;
  background: none;
}
.stepper button + button {
  border-top: 1px solid #d6d6d6;
}
.stepper svg {
  display: block;
  fill: none;
  stroke: #222;
  stroke-width: 3;
  stroke-linecap: round;
  stroke-linejoin: round;
}
.unit {
  margin-left: 12px;
  color: var(--teal);
  font-weight: 700;
}

.groups {
  display: grid;
  grid-template-columns: 1fr 1fr;
  gap: 16px 64px;
  margin-bottom: 15px;
  font-size: 28px;
  font-weight: 700;
  line-height: 32px;
}
h2 {
  padding: 8px 0;
  color: var(--teal);
  font-size: 28px;
}
h2 .icon {
  width: 35px;
  height: 28px;
  margin-right: 10px;
}
.wraps {
  margin-top: -10px;
}
.option {
  display: flex;
  align-items: flex-start;
  gap: 16px;
}
.option span {
  padding: 8px 0;
}
.option input {
  flex: none;
  width: 24px;
  height: 24px;
  margin-top: 9px;
  border: 3px solid #858585;
  border-radius: 8px;
  background: #fff;
  appearance: none;
}
.option input:checked {
  background: var(--teal);
}

.map {
  position: relative;
  height: 604px;
  overflow: hidden;
  border: 2px solid #d0d0d0;
  border-radius: 6px;
  box-shadow: 6px 6px 6px #ccc;
}
.tiles {
  display: block;
  width: 100%;
  height: 100%;
  font-family: Roboto, sans-serif;
}
.tile path {
  fill: none;
  vector-effect: non-scaling-stroke;
  stroke-linejoin: round;
}
.tile .wood { fill: #daf6e5; }
.tile .land { fill: #f2f2f2; }
.tile .park { fill: #cdeed8; }
.tile .park-dark { fill: #c1ebcf; }
.tile .water-fill { fill: #9fd8ea; }
.tile .water { stroke: #9fd8ee; stroke-width: 5; }
.tile .water-bank { stroke: #cdeed8; stroke-width: 11; }
.tile .trail { stroke: #8acbaa; stroke-width: 1; stroke-dasharray: 7 4; }
.tile .street { stroke: #d2dae3; stroke-width: 2; }
.tile .faint { stroke: #e7eaed; stroke-width: 1; }
.tile .main-case { stroke: #b5bfca; stroke-width: 7; }
.tile .main-road { stroke: #d7dee5; stroke-width: 5; }
.tile .wide-case { stroke: #b3bcc8; stroke-width: 12; stroke-linecap: round; }
.tile .wide-road { stroke: #d3dae3; stroke-width: 10; stroke-linecap: round; }
.tile .ramp-case { stroke: #748bb0; stroke-width: 10; }
.tile .ramp { stroke: #90a4c0; stroke-width: 8; }
.tile .motor-case { stroke: #748bb0; stroke-width: 15; }
.tile .motor { stroke: #90a4c0; stroke-width: 12; }
.exit rect {
  fill: #fae07c;
  stroke: #dcbb59;
  stroke-width: 2;
}
.exit text {
  fill: #4b4a3c;
  font-size: 18px;
  text-anchor: middle;
}
.shield {
  fill: #fff;
  font-size: 18px;
  font-weight: 700;
  text-anchor: middle;
}
.road-label,
.district,
.poi,
.google {
  paint-order: stroke;
  stroke: #fff;
  stroke-width: 5;
  stroke-linejoin: round;
}
.road-label {
  fill: #33445a;
  font-size: 22px;
}
.district {
  fill: #54585f;
  font-size: 20px;
  font-weight: 500;
  letter-spacing: 2px;
}
.poi {
  fill: #3d8762;
  font-size: 28px;
}
.poi-pin {
  filter: drop-shadow(0 2px 2px rgba(0, 0, 0, 0.4));
}
.google {
  font-family: Lato, sans-serif;
  font-size: 36px;
  font-weight: 500;
}
.camera {
  position: absolute;
  right: 20px;
  bottom: 47px;
  width: 80px;
  height: 80px;
  padding: 0;
  border: 0;
  border-radius: 50%;
  background: #fff;
  box-shadow: 0 2px 6px rgba(0, 0, 0, 0.3);
}
.camera svg {
  display: block;
  fill: none;
  stroke: #666;
  stroke-width: 5;
}
.credits {
  position: absolute;
  right: 0;
  bottom: 0;
  display: flex;
  align-items: center;
  height: 28px;
  padding: 0 12px;
  background: rgba(245, 245, 245, 0.7);
  color: #000;
  font-family: Roboto, sans-serif;
  font-size: 20px;
  line-height: 28px;
  white-space: nowrap;
}
.keys {
  width: 28px;
  height: 18px;
  margin-right: 24px;
  padding: 0;
  border: 0;
  background: none;
}
.keys svg {
  display: block;
}
.terms {
  margin: 0 22px 0 24px;
}

.sorting {
  display: flex;
  align-items: center;
  margin-top: 16px;
  color: var(--teal);
  font-size: 28px;
  font-weight: 700;
}
.sorting .field {
  font-size: 32px;
  font-weight: 400;
  font-variant-ligatures: normal;
  appearance: none;
  background-image: url("data:image/svg+xml,%3Csvg xmlns='http://www.w3.org/2000/svg' viewBox='0 0 24 14'%3E%3Cpath d='M2 2l10 10L22 2' fill='none' stroke='%23f0f0f0' stroke-width='3'/%3E%3C/svg%3E");
  background-repeat: no-repeat;
  background-size: 24px 14px;
}
.sort-key {
  width: 284px;
  margin: 0 16px 0 10px;
  background-position: right 25px center;
}
.sorting .sort-dir {
  width: 124px;
  background-position: right 10px center;
  font-family: "DejaVu Sans", sans-serif;
}
.count {
  color: var(--teal);
  font-size: 28px;
  font-weight: 700;
  line-height: 42px;
}
.card {
  margin-top: 16px;
  padding: 30px;
  border: 2px solid #d0d0d0;
  border-radius: 10px;
  background: #f6f6f6;
  box-shadow: 6px 6px 6px #ccc;
}
.card-link {
  display: flex;
  justify-content: flex-end;
  align-items: center;
  gap: 8px;
  color: var(--teal);
}
.more {
  gap: 14px;
  margin-top: 32px;
}
.card-body {
  display: grid;
  grid-template-columns: 424fr 535fr;
}
.card-body .icon {
  margin-right: 12px;
}
.avatar {
  display: grid;
  place-items: center;
  width: 40px;
  height: 40px;
  margin-bottom: 16px;
  border-radius: 50%;
  box-shadow: 0 0 1px 1px #ddd;
}
.avatar span {
  width: 32px;
  height: 34px;
  border: 2px solid #95b3dc;
  border-radius: 4px;
  outline: 2px solid #fff;
  outline-offset: -4px;
  background: linear-gradient(#4d9dd2, #3f7fbf);
  color: #fff;
  font-size: 22px;
  line-height: 30px;
  text-align: center;
}
h3 {
  color: var(--teal);
  font-size: 36px;
}
.job-title {
  margin: 16px 0 2px;
}
</style>
